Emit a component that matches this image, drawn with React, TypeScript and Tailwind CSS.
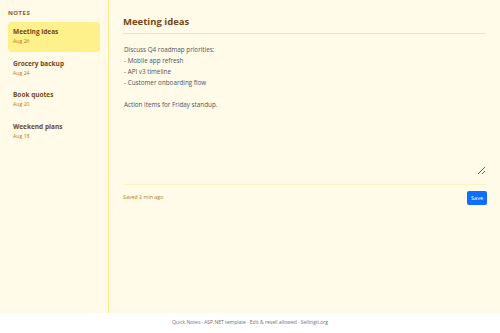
import { useState } from "react"

type Note = { id: number; title: string; date: string; body: string }

const notes: Note[] = [
  {
    id: 1,
    title: "Meeting ideas",
    date: "Aug 26",
    body:
      "Discuss Q4 roadmap priorities:\n- Mobile app refresh\n- API v3 timeline\n- Customer onboarding flow\n\nAction items for Friday standup.",
  },
  { id: 2, title: "Grocery backup", date: "Aug 24", body: "" },
  { id: 3, title: "Book quotes", date: "Aug 20", body: "" },
  { id: 4, title: "Weekend plans", date: "Aug 18", body: "" },
]

export default function App() {
  const [activeId, setActiveId] = useState(1)
  const active = notes.find((n) => n.id === activeId) ?? notes[0]
  const [text, setText] = useState(active.body)

  return (
    <div className="w-[500px] h-[333px] flex flex-col bg-white font-['Open_Sans',sans-serif]">
      <div className="h-[313px] flex bg-[#fffbe8]">
        {/* Sidebar */}
        <aside className="w-[109px] shrink-0 border-r border-[#fde68a] px-2 pt-[9px]">
          <div className="text-[6px] leading-[8px] font-bold tracking-[0.08em] text-[#8a5a1c] uppercase mb-[5px]">
            Notes
          </div>
          <ul className="flex flex-col gap-[1.5px]">
            {notes.map((n) => (
              <li key={n.id}>
                <button
                  onClick={() => {
                    setActiveId(n.id)
                    setText(n.body)
                  }}
                  className={`w-full text-left rounded-[4px] px-[5px] pt-[5px] pb-[6px] ${
                    n.id === activeId ? "bg-[#fef08a]" : ""
                  }`}
                >
                  <div className="text-[6.5px] leading-[10px] font-bold text-[#7a4512]">{n.title}</div>
                  <div className="text-[5.2px] leading-[9px] text-[#b7791f]">{n.date}</div>
                </button>
              </li>
            ))}
          </ul>
        </aside>

        {/* Editor */}
        <main className="flex-1 flex flex-col px-[14px] pt-[15px]">
          <h1 className="text-[9.5px] leading-[14px] font-bold text-[#7a4512] pb-[4px] border-b border-[#fde68a]">
            {active.title}
          </h1>
          <textarea
            value={text}
            onChange={(e) => setText(e.target.value)}
            className="mt-[7px] h-[134px] w-full bg-transparent text-[6.3px] leading-[11px] text-[#4b5563] outline-none resize-y px-[1px] py-[3px]"
          />
          <div className="mt-[9px] border-t border-[#fdf2c0] pt-[6px] flex items-center justify-between">
            <span className="text-[5.3px] text-[#b7791f]">Saved 2 min ago</span>
            <button className="bg-[#0d6efd] text-white text-[5.5px] rounded-[2px] px-[4px] h-[14px] mr-[-1px]">Save</button>
          </div>
        </main>
      </div>
      <footer className="flex-1 flex items-center justify-center text-[5px] text-[#6b7280]">
        Quick Notes · ASP.NET template · Edit &amp; resell allowed · Sellingit.org
      </footer>
    </div>
  )
}
